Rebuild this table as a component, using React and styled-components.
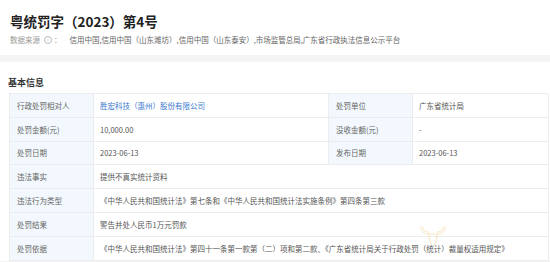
import React from 'react';
import styled, { createGlobalStyle } from 'styled-components';

const GlobalStyle = createGlobalStyle`
  html, body {
    margin: 0;
    padding: 0;
    background: #f4f4f4;
    font-family: "Noto Sans CJK SC", "Liberation Sans", sans-serif;
    color: #333;
  }
`;

const Page = styled.div`
  width: 550px;
  height: 262px;
  overflow: hidden;
  position: relative;
`;

const HeadCard = styled.div`
  background: #fff;
  height: 55px;
  padding: 11px 10px 0;
  box-sizing: border-box;
`;

const Title = styled.h1`
  margin: 0;
  font-size: 13.5px;
  line-height: 20px;
  font-weight: 700;
  color: #222;
`;

const Source = styled.div`
  margin-top: 3px;
  display: flex;
  align-items: center;
  font-size: 7.5px;
  line-height: 12px;
  color: #666;
  white-space: nowrap;
`;

const SourceLabel = styled.span`
  color: #999;
  display: flex;
  align-items: center;
  gap: 2px;
  margin-right: 8px;
`;

const InfoIcon = styled.span`
  display: inline-flex;
  align-items: center;
  justify-content: center;
  width: 6px;
  height: 6px;
  border: 0.8px solid #bbb;
  border-radius: 50%;
  font-size: 5px;
  color: #bbb;
  margin-left: 2px;
`;

const InfoCard = styled.div`
  background: #fff;
  margin-top: 7px;
  padding: 12px 2px 0 9px;
`;

const SectionTitle = styled.h2`
  margin: 0 0 1px;
  font-size: 9px;
  line-height: 18px;
  font-weight: 700;
  color: #333;
  margin-left: -1px;
`;

const Table = styled.div`
  display: grid;
  grid-template-columns: 84px 235px 84px 136px;
  border-top: 1px solid #ececec;
  border-left: 1px solid #ececec;
`;

const Cell = styled.div`
  height: 22.8px;
  display: flex;
  align-items: center;
  padding: 0 ${(p) => (p.$label ? '7px' : '6px')};
  font-size: 7.5px;
  white-space: nowrap;
  overflow: hidden;
  border-bottom: 1px solid #ececec;
  border-right: 1px solid #ececec;
  background: ${(p) => (p.$label ? '#f2f8fd' : '#fff')};
  color: ${(p) => (p.$label ? '#666' : p.$link ? '#3a78cf' : '#555')};
  grid-column: ${(p) => (p.$wide ? 'span 3' : 'auto')};
`;

const Watermark = styled.svg`
  position: absolute;
  left: 418px;
  top: 224px;
  width: 30px;
  height: 24px;
  opacity: 0.55;
`;

const rows = [
  [['行政处罚相对人', '胜宏科技（惠州）股份有限公司', true], ['处罚单位', '广东省统计局']],
  [['处罚金额(元)', '10,000.00'], ['没收金额(元)', '-']],
  [['处罚日期', '2023-06-13'], ['发布日期', '2023-06-13']],
  [['违法事实', '提供不真实统计资料']],
  [['违法行为类型', '《中华人民共和国统计法》第七条和《中华人民共和国统计法实施条例》第四条第三款']],
  [['处罚结果', '警告并处人民币1万元罚款']],
  [['处罚依据', '《中华人民共和国统计法》第四十一条第一款第（二）项和第二款、《广东省统计局关于行政处罚（统计）裁量权适用规定》']],
];

export default function App() {
  return (
    <Page>
      <GlobalStyle />
      <HeadCard>
        <Title>粤统罚字（2023）第4号</Title>
        <Source>
          <SourceLabel>
            数据来源<InfoIcon>i</InfoIcon>：
          </SourceLabel>
          信用中国,信用中国（山东潍坊）,信用中国（山东泰安）,市场监管总局,广东省行政执法信息公示平台
        </Source>
      </HeadCard>
      <InfoCard>
        <SectionTitle>基本信息</SectionTitle>
        <Table>
          {rows.map((row, i) =>
            row.map(([label, value, link], j) => (
              <React.Fragment key={`${i}-${j}`}>
                <Cell $label>{label}</Cell>
                <Cell $link={link} $wide={row.length === 1}>{value}</Cell>
              </React.Fragment>
            ))
          )}
        </Table>
      </InfoCard>
      <Watermark viewBox="0 0 30 24" fill="none" stroke="#f0c27a" strokeWidth="0.8">
        <path d="M3 2 C2 7 6 10 11 10 L19 10 C24 10 28 7 27 2" />
        <path d="M5 3 C5 7 8 8 11 8 M25 3 C25 7 22 8 19 8" />
        <path d="M11 10 C11 16 13 21 15 22 C17 21 19 16 19 10" />
      </Watermark>
    </Page>
  );
}
